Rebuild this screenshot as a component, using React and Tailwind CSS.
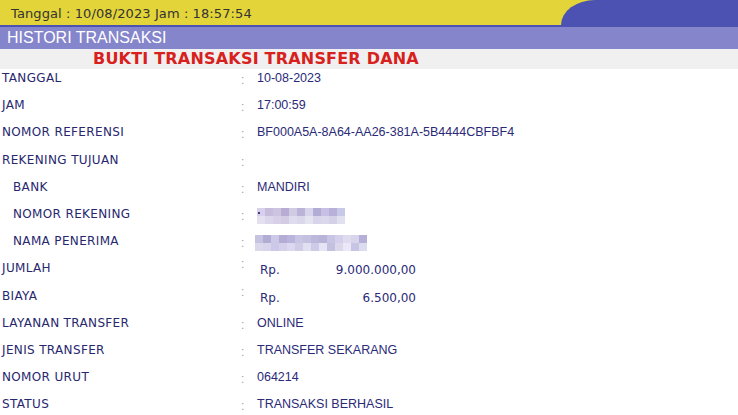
import React from 'react';

const verdana = "font-['DejaVu_Sans',Verdana,sans-serif]";
const arial = "font-['Liberation_Sans',Arial,sans-serif]";

const rekeningBlocks = [
  ['bg-[#d8d0ec]', 'bg-[#c8bcdc]', 'bg-[#ccc4e0]', 'bg-[#b8acd4]', 'bg-[#d0cce4]', 'bg-[#bcb4d8]', 'bg-[#d8d4ec]', 'bg-[#b0acd4]', 'bg-[#c8c0e4]', 'bg-[#b8b0d8]', 'bg-[#c8c8e8]'],
  ['bg-[#e4e0f0]', 'bg-[#dcd8ec]', 'bg-[#d8d0e8]', 'bg-[#d4cce4]', 'bg-[#e0dcf0]', 'bg-[#dcd8ec]', 'bg-[#e4e4f0]', 'bg-[#d8d4ec]', 'bg-[#dcd8ec]', 'bg-[#d4d0e8]', 'bg-[#e0e0f0]'],
];

const namaBlocks = [
  ['bg-[#c4c4e0]', 'bg-[#b0acd4]', 'bg-[#ccc8e8]', 'bg-[#b4acd4]', 'bg-[#b8b4dc]', 'bg-[#c8c4e4]', 'bg-[#c4c0e0]', 'bg-[#bcb8dc]', 'bg-[#b8b4d8]', 'bg-[#c8c4e4]', 'bg-[#d4d0ec]', 'bg-[#e0dcf0]', 'bg-[#d8d4ec]', 'bg-[#b4b0d8]'],
  ['bg-[#dcd8ec]', 'bg-[#d8d4ec]', 'bg-[#ccc8e8]', 'bg-[#d4d0ec]', 'bg-[#dcd8f0]', 'bg-[#d0cce8]', 'bg-[#e0e0f0]', 'bg-[#cccce8]', 'bg-[#e4e4f4]', 'bg-[#c4c0e0]', 'bg-[#dcd8ec]', 'bg-[#ece8f8]', 'bg-[#c8c4e4]', 'bg-[#dcdcf0]'],
];

const Blur = ({ rows, dot }) => (
  <div className="relative mt-[1px]">
    {dot && <span className="absolute left-[1px] top-[4px] h-[2px] w-[2px] bg-[#404080]" />}
    {rows.map((row, i) => (
      <div key={i} className="flex">
        {row.map((c, j) => (
          <span key={j} className={`h-[8px] w-[8px] ${c}`} />
        ))}
      </div>
    ))}
  </div>
);

const Colon = ({ top }) => (
  <div className={`w-[16px] text-[12px] text-[#a0a0a0] ${arial} ${top ? '-mt-[6px]' : ''}`}>:</div>
);

const Row = ({ label, indent, children, money }) => (
  <div className="flex h-[27.2px] items-start pt-[1px]">
    <div className={`w-[241px] text-[12px] leading-[15px] tracking-[0.35px] text-[#27276e] ${verdana} ${indent ? 'pl-[13px]' : 'pl-[2px]'}`}>
      {label}
    </div>
    <Colon top={money} />
    <div className={`text-[12.5px] leading-[15px] text-[#2a2a78] ${arial}`}>{children}</div>
  </div>
);

const Money = ({ amount }) => (
  <div className={`flex w-[159px] pl-[3px] pt-[2px] text-[12px] text-[#2a2a78] ${verdana}`}>
    <span>Rp.</span>
    <span className="ml-auto">{amount}</span>
  </div>
);

export default function App() {
  return (
    <div className="h-[415px] w-[738px] overflow-hidden bg-white">
      <div className="flex h-[27px] border-b-2 border-[#4b52b1] bg-[#e3d43a]">
        <div className={`flex-1 pl-[11px] pt-[6px] text-[13px] leading-[15px] tracking-[0.1px] text-[#333] ${verdana}`}>
          Tanggal : 10/08/2023 Jam : 18:57:54
        </div>
        <div className="h-[25px] w-[177px] rounded-tl-[34px_25px] bg-[#4b52b1]" />
      </div>
      <div className={`h-[22px] bg-[#8585cc] pl-[7px] pt-[2px] text-[16px] leading-[18px] text-white ${arial}`}>
        HISTORI TRANSAKSI
      </div>
      <div className={`h-[20px] bg-[#f0f0f0] pl-[93px] pt-[1px] text-[16px] font-bold leading-[18px] tracking-[0.2px] text-[#d8201c] ${verdana}`}>
        BUKTI TRANSAKSI TRANSFER DANA
      </div>
      <div className="pt-[1px]">
        <Row label="TANGGAL">10-08-2023</Row>
        <Row label="JAM">17:00:59</Row>
        <Row label="NOMOR REFERENSI">BF000A5A-8A64-AA26-381A-5B4444CBFBF4</Row>
        <Row label="REKENING TUJUAN" />
        <Row label="BANK" indent>MANDIRI</Row>
        <Row label="NOMOR REKENING" indent>
          <Blur rows={rekeningBlocks} dot />
        </Row>
        <Row label="NAMA PENERIMA" indent>
          <div className="-ml-[2px]">
            <Blur rows={namaBlocks} />
          </div>
        </Row>
        <Row label="JUMLAH" money>
          <Money amount="9.000.000,00" />
        </Row>
        <Row label="BIAYA" money>
          <Money amount="6.500,00" />
        </Row>
        <Row label="LAYANAN TRANSFER">ONLINE</Row>
        <Row label="JENIS TRANSFER">TRANSFER SEKARANG</Row>
        <Row label="NOMOR URUT">064214</Row>
        <Row label="STATUS">TRANSAKSI BERHASIL</Row>
      </div>
    </div>
  );
}
